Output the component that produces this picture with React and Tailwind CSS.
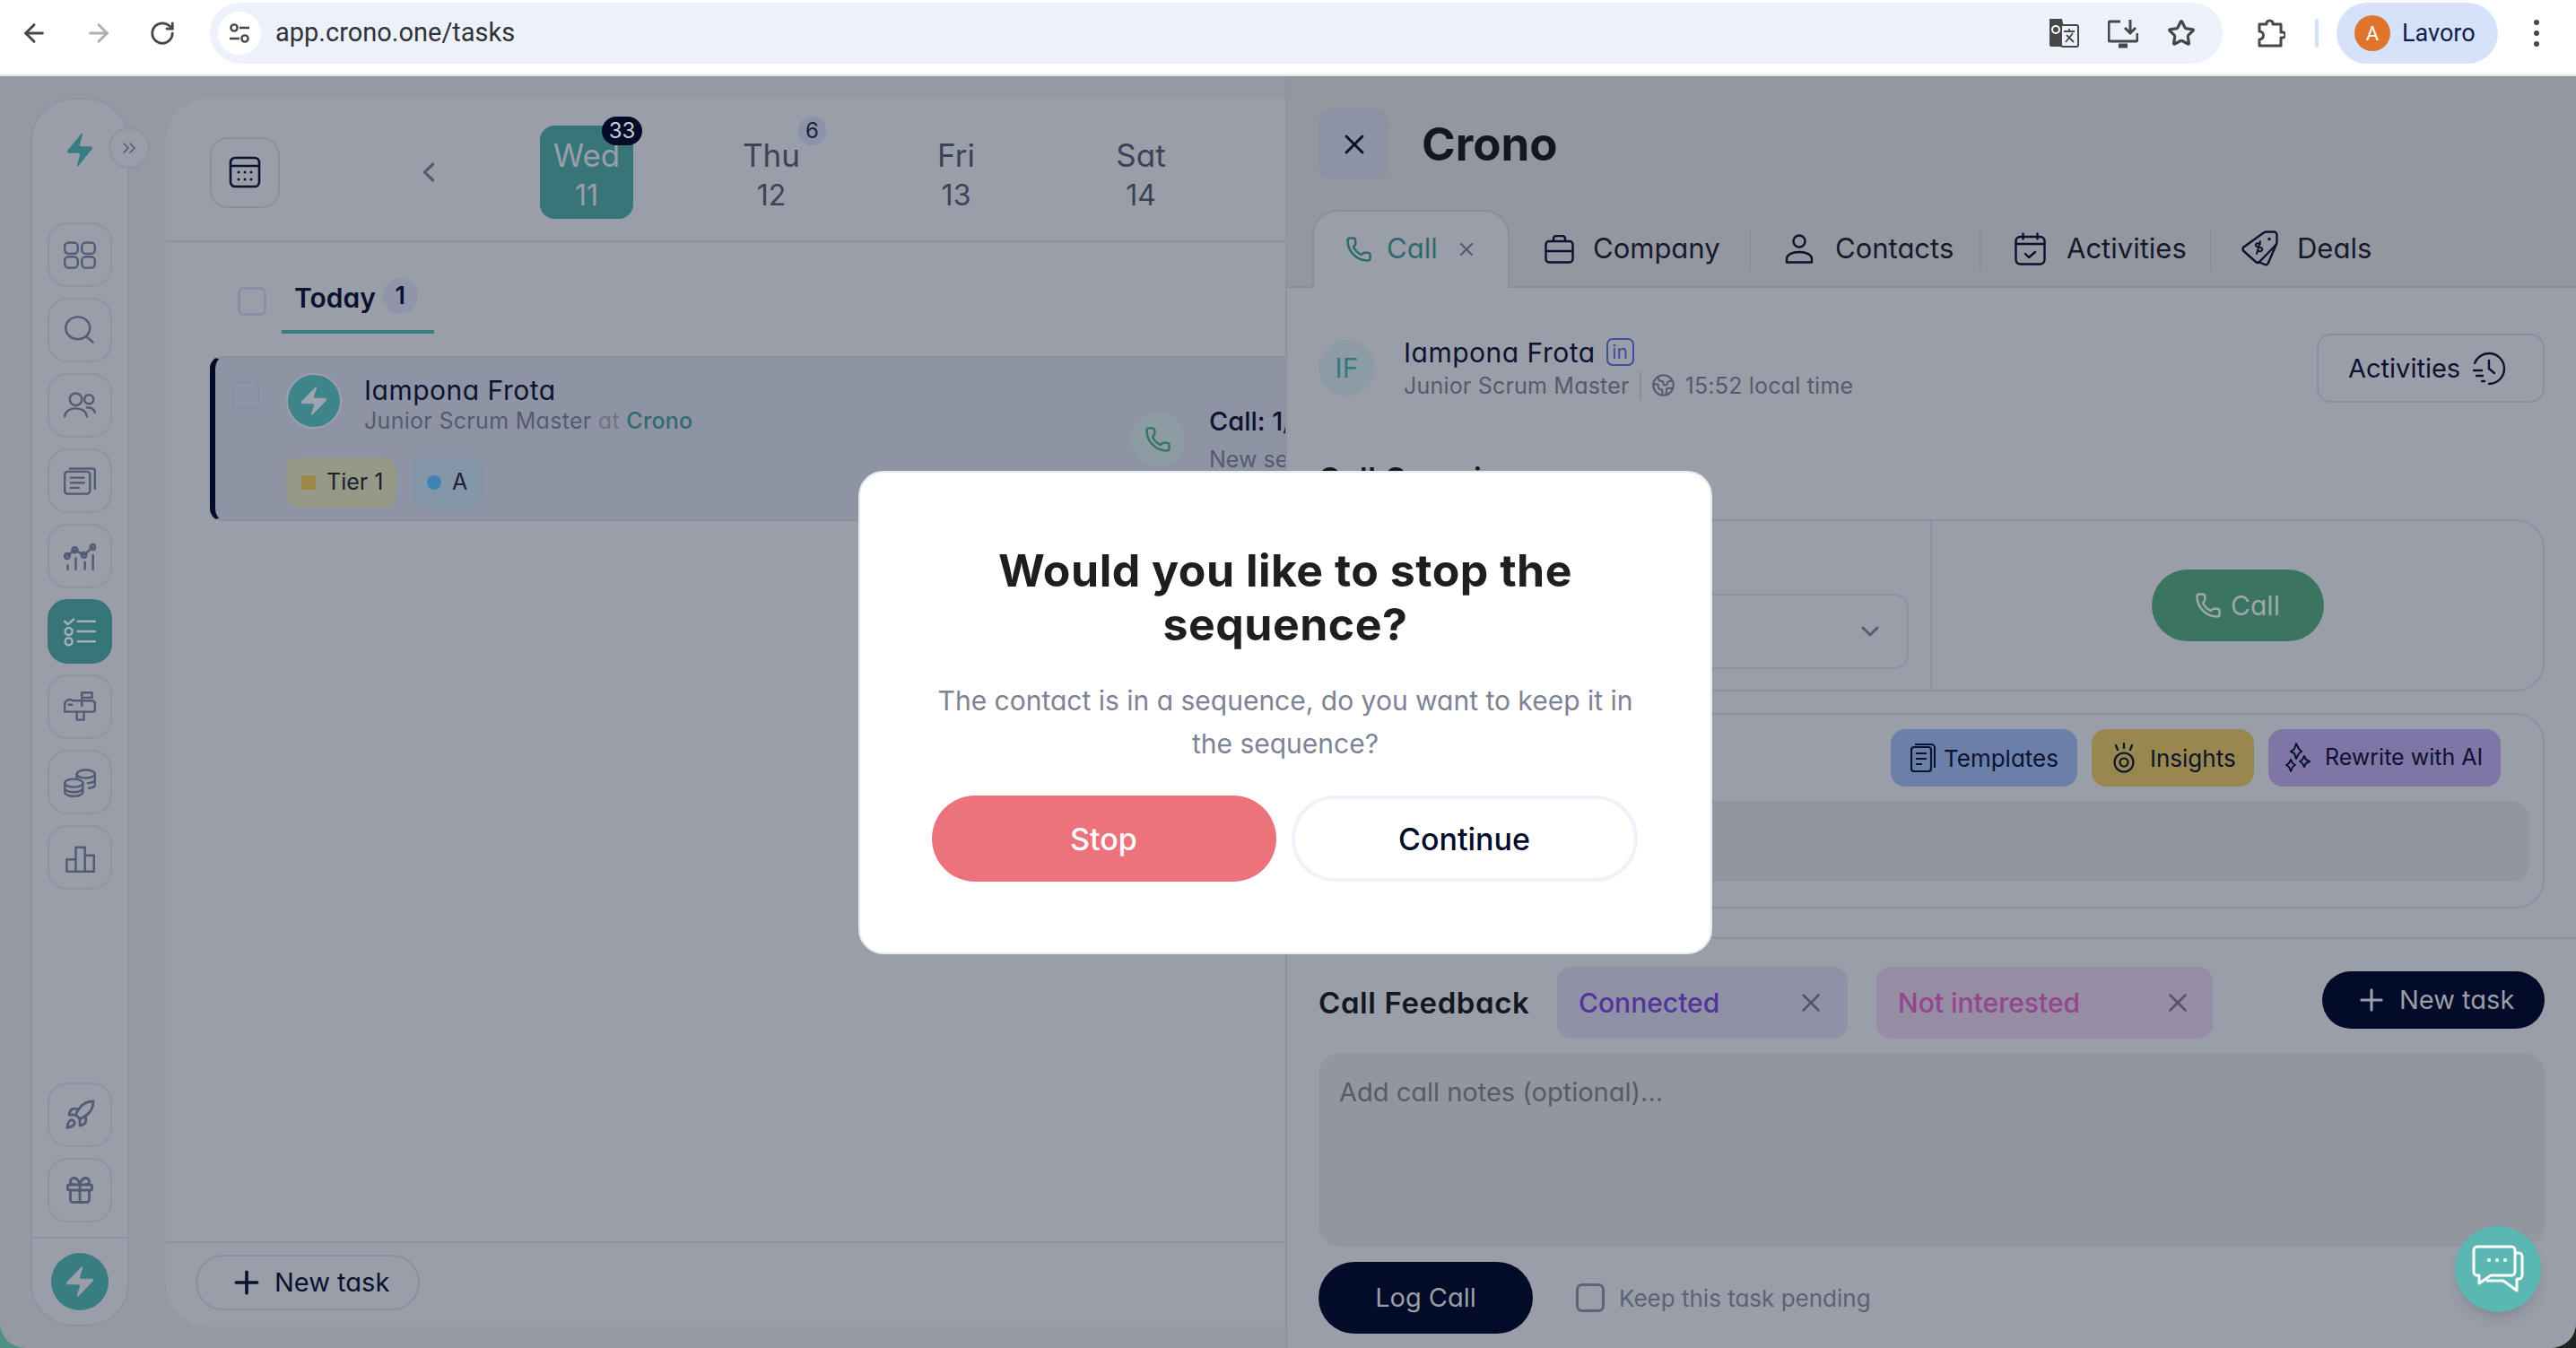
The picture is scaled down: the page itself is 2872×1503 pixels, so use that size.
import {
  ArrowLeft, ArrowRight, RotateCw, Star, Phone, X, Earth, ChevronDown, ChevronLeft, ChevronsRight, Plus, Rocket, Gift,
} from "lucide-react";

const BOLT = "M4 14a1 1 0 0 1-.78-1.63l9.9-10.2a.5.5 0 0 1 .86.46l-1.92 6.02A1 1 0 0 0 13 10h7a1 1 0 0 1 .78 1.63l-9.9 10.2a.5.5 0 0 1-.86-.46l1.92-6.02A1 1 0 0 0 11 14z";

// sidebar glyphs, all on a 32 box
function Glyph({ children, color = "#535b75" }) {
  return (
    <svg width="36" height="36" viewBox="0 0 32 32" fill="none" stroke={color} strokeWidth="2.2" strokeLinecap="round" strokeLinejoin="round">
      {children}
    </svg>
  );
}

const navTop = [
  { id: "grid", icon: <Glyph><rect x="1" y="4" width="13" height="11" rx="4" /><rect x="18" y="4" width="13" height="11" rx="4" /><rect x="1" y="18" width="13" height="11" rx="4" /><rect x="18" y="18" width="13" height="11" rx="4" /></Glyph> },
  { id: "search", icon: <Glyph><ellipse cx="14" cy="14" rx="12" ry="11" /><path d="M23 23l6 5" /></Glyph> },
  { id: "users", icon: <Glyph><circle cx="12" cy="10" r="6" /><path d="M1 27c1-6 5-8 11-8s10 2 11 8" /><circle cx="25" cy="10" r="4.5" /><path d="M23 18c4 0 7 1 8 5" /></Glyph> },
  { id: "docs", icon: <Glyph><rect x="1" y="7" width="25" height="22" rx="3" /><path d="M6 4h23a2 2 0 0 1 2 2v18" /><path d="M7 13h13M7 18h13M7 23h8" /></Glyph> },
  { id: "stats", icon: <Glyph><path d="M3 16l8-6 9 5 9-8" /><circle cx="3.5" cy="16" r="2.6" /><circle cx="11" cy="10" r="2.6" /><circle cx="20" cy="15" r="2.6" /><circle cx="29" cy="7" r="2.6" /><path d="M4 25v4M12 18v11M21 22v7M29 15v14" /></Glyph> },
  { id: "tasks", active: true, icon: <Glyph color="#9fb3b9"><path d="M1 6l3 3 6-5" /><circle cx="5" cy="16" r="3.5" /><circle cx="5" cy="26" r="3.5" /><path d="M14 6h17M14 16h17M14 26h17" /></Glyph> },
  { id: "mail", icon: <Glyph><path d="M9 10h19a3 3 0 0 1 3 3v6a2 2 0 0 1-2 2H1v-7a5 5 0 0 1 8-4z" /><path d="M13 21v8h7v-8" /><path d="M18 15V2h10v5H18" /><path d="M5 14h3" /></Glyph> },
  { id: "coins", icon: <Glyph><ellipse cx="10" cy="17" rx="9" ry="4" /><path d="M1 17v9c0 2 4 4 9 4s9-2 9-4v-9M1 22c0 2 4 4 9 4s9-2 9-4" /><ellipse cx="22" cy="8" rx="9" ry="4" /><path d="M31 8v11c0 1-2 3-6 3M13 9v4M31 14c0 1-3 3-7 3" /></Glyph> },
  { id: "bars", icon: <Glyph><path d="M3 30V18h9v12M12 30V6h9v24M21 30V14h9v16M3 30h27" /></Glyph> },
];

function NavButton({ active, children }) {
  return (
    <div className={`w-[72px] h-[72px] rounded-[22px] flex items-center justify-center border-2 ${active ? "bg-[#387579] border-[#387579]" : "border-[#8f93a2]"}`}>
      {children}
    </div>
  );
}

function Sidebar() {
  return (
    <div className="relative w-[110px] h-[1370px] shrink-0 rounded-[48px] border-2 border-[#8f93a2] bg-[#9a9ea9] flex flex-col items-center">
      <svg className="mt-[34px] shrink-0" width="44" height="44" viewBox="0 0 24 24" fill="#387d82"><path d={BOLT} transform="translate(1.800 0) scale(.85 1)" /></svg>
      <div className="absolute left-[85px] top-[31px] w-[46px] h-[46px] rounded-full border-2 border-[#8f93a2] bg-[#9a9ea9] flex items-center justify-center">
        <ChevronsRight size={24} strokeWidth={1.6} color="#535b75" />
      </div>
      <div className="mt-[59px] flex flex-col gap-[12px]">
        {navTop.map((n) => <NavButton key={n.id} active={n.active}>{n.icon}</NavButton>)}
      </div>
      <div className="mt-auto flex flex-col gap-[12px]">
        <NavButton><Rocket size={36} strokeWidth={1.9} color="#535b75" /></NavButton>
        <NavButton><Gift size={36} strokeWidth={1.9} color="#535b75" /></NavButton>
      </div>
      <div className="mt-[16px] w-full border-t-2 border-[#8f93a2] h-[98px] flex justify-center pt-[16px]">
        <div className="w-[64px] h-[64px] rounded-full bg-[#387d82] flex items-center justify-center">
          <svg width="40" height="42" viewBox="0 0 24 24" fill="#9a9ea9"><path d={BOLT} /></svg>
        </div>
      </div>
    </div>
  );
}

function ChromeBar() {
  return (
    <div className="h-[85px] bg-white border-b-2 border-[#e4e4e4] flex items-center pb-[9px] relative z-10">
      <div className="w-[234px] flex items-center shrink-0 pl-[22px] gap-[40px]">
        <ArrowLeft size={32} strokeWidth={2.2} color="#474747" />
        <ArrowRight size={32} strokeWidth={2.2} color="#b0b0b0" />
        <RotateCw size={30} strokeWidth={2.2} color="#474747" />
      </div>
      <div className="w-[2244px] h-[68px] rounded-full bg-[#edf2fa] flex items-center pl-[9px] pr-[30px]">
        <div className="w-[48px] h-[48px] rounded-full bg-white flex items-center justify-center">
          <svg width="28" height="28" viewBox="0 0 28 28" fill="none" stroke="#474747" strokeWidth="2.4"><circle cx="8" cy="8" r="3.6" /><path d="M14 8h11M3 20h11" /><circle cx="20" cy="20" r="3.6" /></svg>
        </div>
        <span className="ml-[16px] text-[29px] text-[#303238] font-['Roboto',sans-serif]">app.crono.one/tasks</span>
        <div className="ml-auto flex items-center gap-[32px]">
          <svg width="34" height="34" viewBox="0 0 34 34" fill="none">
            <path d="M1 1h14l6 31H3a2 2 0 0 1-2-2z" fill="#474747" />
            <rect x="14" y="8" width="19" height="24" rx="2" stroke="#474747" strokeWidth="2" fill="#edf2fa" />
            <path d="M17 15h12M23 12v3M19 27l8-10M20 19l8 8" stroke="#474747" strokeWidth="1.8" />
            <circle cx="8" cy="13" r="4" stroke="#fff" strokeWidth="2" />
          </svg>
          <svg width="34" height="34" viewBox="0 0 34 34" fill="none" stroke="#474747" strokeWidth="3">
            <path d="M14 4H3a2 2 0 0 0-2 2v18a2 2 0 0 0 2 2h28a2 2 0 0 0 2-2v-7" />
            <path d="M25 2v15M19 11l6 6 6-6" />
            <path d="M12 31h10" strokeWidth="5" />
          </svg>
          <Star size={32} strokeWidth={2.4} color="#474747" />
        </div>
      </div>
      <svg className="ml-[38px] shrink-0" width="32" height="34" viewBox="0 0 32 34" fill="none" stroke="#474747" strokeWidth="3" strokeLinejoin="round">
        <path d="M3 7h8V5a4 4 0 0 1 7 0v2h9v9h2a3 3 0 0 1 0 6h-2v9H3v-7a4.500 4.500 0 0 0 0-9z" />
      </svg>
      <div className="ml-[33px] w-[4px] h-[32px] rounded bg-[#d3e0f8] shrink-0" />
      <div className="ml-[20px] w-[180px] h-[68px] rounded-full bg-[#d6e2f9] flex items-center pl-[20px] shrink-0">
        <div className="w-[40px] h-[40px] rounded-full bg-[#e0742c] text-white text-[22px] flex items-center justify-center font-['Roboto',sans-serif]">A</div>
        <span className="ml-[13px] text-[27px] text-[#0c1f4d] font-['Roboto',sans-serif]">Lavoro</span>
      </div>
      <div className="ml-[40px] flex flex-col gap-[6px]">
        <span className="w-[6px] h-[6px] rounded-full bg-[#474747]" />
        <span className="w-[6px] h-[6px] rounded-full bg-[#474747]" />
        <span className="w-[6px] h-[6px] rounded-full bg-[#474747]" />
      </div>
    </div>
  );
}

const days = [
  { name: "Wed", num: 11, badge: "33", active: true },
  { name: "Thu", num: 12, badge: "6" },
  { name: "Fri", num: 13 },
  { name: "Sat", num: 14 },
];

function Day({ d }) {
  return (
    <div className="w-[206px] shrink-0 flex justify-center">
      <div className={`relative w-[104px] h-[104px] pt-[6px] rounded-[16px] flex flex-col items-center justify-center gap-[9px] ${d.active ? "bg-[#387579] text-[#9a9ea9]" : "text-[#3d4356]"}`}>
        <span className="text-[35px] leading-[36px]">{d.name}</span>
        <span className="text-[32px] leading-[36px]">{d.num}</span>
        {d.badge && (
          <span className={`absolute -top-[10px] rounded-full h-[32px] flex items-center justify-center text-[24px] ${d.active ? "left-[69px] w-[45px] bg-[#020b27] text-[#c8ccd6]" : "left-[82px] w-[31px] bg-[#8a93aa] text-[#1c2238]"}`}>
            {d.badge}
          </span>
        )}
      </div>
    </div>
  );
}

function TaskList() {
  return (
    <div className="flex-1 min-w-0 h-[1370px] rounded-l-[48px] bg-[#9a9ea9] overflow-hidden flex flex-col">
      <div className="h-[161px] shrink-0 border-b-2 border-[#8e929e] pt-[7px] pl-[49px] flex items-center">
        <div className="w-[78px] h-[79px] rounded-[20px] border-2 border-[#8b8fa2] flex items-center justify-center shrink-0">
          <svg width="36" height="36" viewBox="0 0 36 36" fill="none" stroke="#0a1230" strokeWidth="2.6">
            <rect x="2" y="2" width="32" height="32" rx="5" />
            <path d="M2 11h32" />
            <path d="M11 18h.01M18 18h.01M25 18h.01M11 26h.01M18 26h.01M25 26h.01" strokeWidth="3" strokeLinecap="round" />
          </svg>
        </div>
        <ChevronLeft className="ml-[148px] mr-[55px] shrink-0" size={36} strokeWidth={2.2} color="#535b75" />
        <div className="flex">
          {days.map((d) => <Day key={d.name} d={d} />)}
        </div>
      </div>

      <div className="h-[102px] shrink-0 pl-[80px] flex items-end">
        <div className="w-[32px] h-[32px] rounded-[7px] border-[3px] border-[#8590a8] mb-[20px]" />
        <div className="ml-[17px] w-[170px] h-[62px] border-b-4 border-[#387d82] flex items-start pl-[14px]">
          <span className="text-[30px] leading-[44px] font-semibold text-[#0a1230]">Today</span>
          <span className="ml-[8px] w-[39px] h-[40px] rounded-full bg-[#8f96aa] text-[27px] font-semibold text-[#0a1230] flex items-center justify-center">1</span>
        </div>
      </div>

      <div className="ml-[49px] mt-[25px] h-[184px] shrink-0 bg-[#8e94a4] rounded-l-[14px] border-l-[6px] border-y-2 border-l-[#020b27] border-y-[#8a8f9e] flex">
        <div className="ml-[18px] mt-[26px] w-[32px] h-[32px] rounded-[7px] border-[3px] border-[#8590a8] shrink-0" />
        <div className="ml-[29px] pt-[17px]">
          <div className="flex h-[66px]">
            <div className="w-[62px] h-[62px] rounded-full bg-[#3d858b] border-2 border-[#9aa0ae] flex items-center justify-center">
              <svg width="38" height="40" viewBox="0 0 24 24" fill="#9da3b0"><path d={BOLT} /></svg>
            </div>
            <div className="ml-[25px] whitespace-nowrap">
              <div className="text-[30px] tracking-[0.5px] leading-[38px] text-[#0c1230]">Iampona Frota</div>
              <div className="text-[25px] tracking-[0.3px] leading-[30px] text-[#555b6e]">Junior Scrum Master <span className="text-[#6f7484]">at</span> <span className="text-[#2f6a6e] font-medium">Crono</span></div>
            </div>
          </div>
          <div className="mt-[28px] flex gap-[17px]">
            <div className="w-[123px] h-[56px] rounded-[14px] bg-[#969888] flex items-center pl-[17px] text-[25px] text-[#1c2030]">
              <span className="w-[16px] h-[16px] bg-[#9d8a4b] mr-[12px]" />Tier 1
            </div>
            <div className="w-[80px] h-[56px] rounded-[14px] bg-[#8397a8] flex items-center pl-[17px] text-[25px] text-[#1c2030]">
              <span className="w-[16px] h-[16px] rounded-full bg-[#3f85b3] mr-[12px]" />A
            </div>
          </div>
        </div>
        <div className="ml-auto w-[172px] shrink-0 flex pt-[61px] overflow-hidden">
          <div className="w-[60px] h-[60px] rounded-full bg-[#8d9ca4] flex items-center justify-center shrink-0">
            <Phone size={30} strokeWidth={2} color="#3b7561" />
          </div>
          <div className="ml-[27px] -mt-[10px] whitespace-nowrap">
            <div className="text-[29px] leading-[40px] font-medium text-[#0c1230]">Call: 1/2</div>
            <div className="text-[25px] leading-[32px] mt-[6px] text-[#555b6e]">New sequence</div>
          </div>
        </div>
      </div>

      <div className="mt-auto h-[95px] shrink-0 border-t-2 border-[#8e929e] pl-[33px] pt-[13px]">
        <div className="w-[250px] h-[62px] rounded-full border-2 border-[#8b8fa2] flex items-center pl-[35px]">
          <Plus size={40} strokeWidth={2.2} color="#0a1230" />
          <span className="ml-[11px] text-[29px] text-[#0a1230]">New task</span>
        </div>
      </div>
    </div>
  );
}

// tab icons drawn to the picture, lucide has none with these strokes
const tabIcons = {
  company: (
    <svg width="33" height="32" viewBox="0 0 33 32" fill="none" stroke="#0a1230" strokeWidth="2.4" strokeLinejoin="round">
      <rect x="1.500" y="7" width="30" height="23.500" rx="3.500" />
      <path d="M10 7V4a3 3 0 0 1 3-3h7a3 3 0 0 1 3 3v3M1.500 18h30" />
    </svg>
  ),
  contacts: (
    <svg width="32" height="33" viewBox="0 0 32 33" fill="none" stroke="#0a1230" strokeWidth="2.4" strokeLinejoin="round">
      <circle cx="16" cy="8" r="6.500" />
      <path d="M2 31.500V28c0-5 6-8 14-8s14 3 14 8v3.500z" />
    </svg>
  ),
  activities: (
    <svg width="35" height="37" viewBox="0 0 35 37" fill="none" stroke="#0a1230" strokeWidth="2.4" strokeLinecap="round" strokeLinejoin="round">
      <rect x="1.500" y="5" width="32" height="30.500" rx="5" />
      <path d="M9.500 1.500v6M25.500 1.500v6M1.500 13h32M12 24l4 4 7-6" />
    </svg>
  ),
  deals: (
    <svg width="41" height="42" viewBox="0 0 41 42" fill="none" stroke="#0a1230" strokeWidth="2.4" strokeLinecap="round" strokeLinejoin="round">
      <path d="M28 1.500h8a3.500 3.500 0 0 1 3.500 3.500v8a5 5 0 0 1-1.500 3.500L20 35a3 3 0 0 1-4 0L2.500 23a3 3 0 0 1 0-4.500L24 3a6 6 0 0 1 4-1.500z" />
      <path d="M39 15l-9 21a3 3 0 0 1-4 2l-7-3" />
      <path d="M31 9.500h.01" strokeWidth="3.500" />
      <path d="M21 15c-3-2-6 0-5 2s6 1 7 3-2 5-5 2M21 12l-4 14" strokeWidth="2" />
    </svg>
  ),
};

function Tab({ icon, label, boxClass, gapClass }) {
  return (
    <div className={`h-[48px] flex items-center shrink-0 ${boxClass}`}>
      {icon}
      <span className={`text-[31px] text-[#151a2d] ${gapClass}`}>{label}</span>
    </div>
  );
}

function Details() {
  return (
    <div className="w-[1439px] shrink-0 h-[1418px] -mt-[24px] bg-[#9a9ea9] border-l-2 border-[#8f939e] flex flex-col">
      <div className="h-[236px] shrink-0 bg-[#94979f] border-b-2 border-[#8a8d9c] flex flex-col">
        <div className="mt-[36px] ml-[35px] flex items-center">
          <div className="w-[79px] h-[80px] rounded-[16px] bg-[#8d93a4] flex items-center justify-center">
            <X size={36} strokeWidth={2} color="#0a1230" />
          </div>
          <span className="ml-[36px] text-[51px] font-bold text-[#14171f]">Crono</span>
        </div>
        <div className="mt-auto ml-[28px] flex items-end -mb-[2px]">
          <div className="w-[220px] h-[87px] rounded-t-[28px] border-2 border-b-0 border-[#8a8d9c] bg-[#9a9ea9] flex items-center pl-[35px] pb-[2px] shrink-0">
            <Phone size={30} strokeWidth={2} color="#2f6a6e" />
            <span className="ml-[16px] text-[31px] text-[#2f6a6e]">Call</span>
            <X className="ml-[20px]" size={24} strokeWidth={2.2} color="#535b75" />
          </div>
          <div className="flex items-center h-[85px] pb-[2px]">
            <Tab boxClass="w-[269px] pl-[39px] border-r-2 border-[#8b8f9a]" gapClass="ml-[21px]" label="Company" icon={tabIcons.company} />
            <Tab boxClass="w-[257px] pl-[38px] border-r-2 border-[#8b8f9a]" gapClass="ml-[24px]" label="Contacts" icon={tabIcons.contacts} />
            <Tab boxClass="w-[257px] pl-[37px] border-r-2 border-[#8b8f9a]" gapClass="ml-[23px]" label="Activities" icon={tabIcons.activities} />
            <Tab boxClass="w-[240px] pl-[33px]" gapClass="ml-[21px]" label="Deals" icon={tabIcons.deals} />
          </div>
        </div>
      </div>

      <div className="mx-[35px] mt-[51px] h-[77px] shrink-0 flex items-center">
        <div className="w-[63px] h-[63px] rounded-full bg-[#8d9ca4] text-[#2f7a7e] text-[30px] flex items-center justify-center">IF</div>
        <div className="ml-[32px]">
          <div className="flex items-center">
            <span className="text-[30px] tracking-[0.5px] leading-[36px] text-[#0c1230]">Iampona Frota</span>
            <span className="ml-[12px] w-[31px] h-[31px] rounded-[7px] border-2 border-[#3b4ea0] text-[#3b4ea0] text-[21px] leading-none flex items-center justify-center">in</span>
          </div>
          <div className="flex items-center mt-[2px] text-[25px] tracking-[0.2px] leading-[34px] text-[#555b6e]">
            <span>Junior Scrum Master</span>
            <span className="mx-[11px] w-[2px] h-[32px] bg-[#8b8f9a]" />
            <Earth size={27} strokeWidth={1.8} color="#555b6e" />
            <span className="ml-[11px]">15:52 local time</span>
          </div>
        </div>
        <div className="ml-auto w-[254px] h-[77px] rounded-[16px] border-2 border-[#8b8fa2] flex items-center pl-[33px]">
          <span className="text-[29px] text-[#0c1230]">Activities</span>
          <svg className="ml-[12px]" width="40" height="40" viewBox="0 0 40 40" fill="none" stroke="#0a1230" strokeWidth="2.400" strokeLinecap="round" strokeLinejoin="round">
            <path d="M4 14a17 17 0 0 1 16-11 17 17 0 0 1 0 34" />
            <path d="M20 11v9l6 5M3 22h9M6 28h7M12 34h3" />
          </svg>
        </div>
      </div>

      <div className="mx-[35px] mt-[62px] h-[44px] shrink-0 text-[33px] tracking-[0.6px] leading-[44px] font-semibold text-[#14171f]">Call Overview</div>

      <div className="mx-[35px] mt-[24px] h-[192px] shrink-0 rounded-[32px] border-2 border-[#8d91a0] flex">
        <div className="w-[682px] border-r-2 border-[#8d91a0] pt-[81px] pl-[24px] pr-[24px] shrink-0">
          <div className="h-[84px] rounded-[16px] border-2 border-[#8d91a0] flex items-center justify-end pr-[25px]">
            <ChevronDown size={32} strokeWidth={2.2} color="#535b75" />
          </div>
        </div>
        <div className="flex-1 flex items-center justify-center">
          <div className="w-[192px] h-[80px] rounded-full bg-[#3b7561] flex items-center justify-center text-[30px] text-[#9fa6ac]">
            <Phone size={30} strokeWidth={2} color="#9fa6ac" />
            <span className="ml-[10px]">Call</span>
          </div>
        </div>
      </div>

      <div className="mx-[35px] mt-[24px] h-[218px] shrink-0 rounded-[32px] border-2 border-[#8d91a0] pt-[16px]">
        <div className="flex justify-end gap-[16px] pr-[47px]">
          <div className="w-[208px] h-[64px] rounded-[16px] bg-[#6b80a8] flex items-center pl-[22px] text-[26px] text-[#0c1230]">
            <svg width="28" height="32" viewBox="0 0 28 32" fill="none" stroke="#0a1230" strokeWidth="2.2"><rect x="1" y="4" width="22" height="27" rx="3" /><path d="M5 1h18a4 4 0 0 1 4 4v22" /><path d="M6 11h12M6 17h12M6 23h7" /></svg>
            <span className="ml-[9px]">Templates</span>
          </div>
          <div className="w-[181px] h-[64px] rounded-[16px] bg-[#98884d] flex items-center pl-[23px] text-[26px] text-[#0c1230]">
            <svg width="26" height="34" viewBox="0 0 26 34" fill="none" stroke="#0a1230" strokeWidth="2.2"><circle cx="13" cy="22" r="10.500" /><circle cx="13" cy="22" r="4.500" /><path d="M13 1v5M4 3l2 5M22 3l-2 5" strokeLinecap="round" /></svg>
            <span className="ml-[16px]">Insights</span>
          </div>
          <div className="w-[259px] h-[64px] rounded-[16px] bg-[#8076a6] flex items-center pl-[19px] text-[25px] text-[#0c1230]">
            <svg width="28" height="34" viewBox="0 0 28 34" fill="none" stroke="#0a1230" strokeWidth="2" strokeLinejoin="round"><path d="M12 1l3 6 3 3-3 2-3 6-2-6-4-2 4-3zM6 19l2 4 3 2-3 2-2 5-2-5-3-2 3-2zM21 15l2 4 4 2-4 2-2 4-2-4-3-2 3-2z" /></svg>
            <span className="ml-[16px]">Rewrite with AI</span>
          </div>
        </div>
        <div className="mt-[16px] ml-[16px] mr-[15px] h-[90px] rounded-[20px] bg-[#92969f]" />
      </div>

      <div className="mt-[32px] h-[2px] shrink-0 bg-[#8d91a0]" />

      <div className="mx-[35px] mt-[31px] h-[80px] shrink-0 flex items-start">
        <span className="text-[33px] tracking-[0.6px] leading-[80px] font-semibold text-[#14171f] w-[266px] shrink-0 whitespace-nowrap">Call Feedback</span>
        <div className="w-[324px] h-[80px] rounded-[16px] bg-[#8f91a6] flex items-center justify-between pl-[24px] pr-[24px] shrink-0">
          <span className="text-[30px] font-medium text-[#51359b]">Connected</span>
          <X size={34} strokeWidth={1.8} color="#505568" />
        </div>
        <div className="ml-[32px] w-[375px] h-[80px] rounded-[16px] bg-[#968ca3] flex items-center justify-between pl-[24px] pr-[22px] shrink-0">
          <span className="text-[30px] font-medium text-[#93468f]">Not interested</span>
          <X size={34} strokeWidth={1.8} color="#505568" />
        </div>
        <div className="ml-auto mt-[5px] w-[248px] h-[64px] rounded-full bg-[#020b27] flex items-center pl-[36px]">
          <Plus size={38} strokeWidth={2} color="#9a9ea9" />
          <span className="ml-[12px] text-[29px] text-[#9a9ea9]">New task</span>
        </div>
      </div>

      <div className="mx-[35px] mt-[16px] h-[216px] shrink-0 rounded-[24px] bg-[#92969f] px-[23px] py-[24px] text-[29px] leading-[40px] text-[#565b68]">
        Add call notes (optional)...
      </div>

      <div className="mx-[35px] mt-[17px] h-[80px] shrink-0 flex items-center">
        <div className="w-[239px] h-[80px] rounded-full bg-[#020b27] flex items-center justify-center text-[29px] text-[#9a9ea9]">Log Call</div>
        <div className="ml-[48px] w-[32px] h-[32px] rounded-[7px] border-[3px] border-[#5d6479]" />
        <span className="ml-[16px] text-[26px] text-[#5d6272]">Keep this task pending</span>
      </div>
    </div>
  );
}

function StopSequenceModal() {
  return (
    <div className="absolute left-[957px] top-[525px] z-20 w-[952px] h-[539px] rounded-[28px] bg-white border-2 border-[#e6e9f0] flex flex-col items-center">
      <h2 className="mt-[79px] w-[720px] text-center text-[50px] leading-[60px] font-bold tracking-[0.5px] text-[#1e1e1e]">
        Would you like to stop the sequence?
      </h2>
      <p className="mt-[31px] w-[800px] text-center text-[30px] leading-[48px] text-[#7d8394]">
        The contact is in a sequence, do you want to keep it in the sequence?
      </p>
      <div className="mt-[34px] flex gap-[17px] -translate-x-[1px]">
        <div className="w-[384px] h-[96px] rounded-full bg-[#ec727b] flex items-center justify-center text-[34px] font-medium text-white">Stop</div>
        <div className="w-[386px] h-[96px] rounded-full bg-white border-4 border-[#edf2fb] flex items-center justify-center text-[34px] font-medium text-[#020b27]">Continue</div>
      </div>
    </div>
  );
}

function ChatBubble() {
  return (
    <div className="absolute right-[39px] top-[1367px] z-20 w-[96px] h-[96px] rounded-full bg-[#5bb7b2] shadow-lg flex items-center justify-center">
      <svg width="58" height="54" viewBox="0 0 58 54" fill="none" stroke="#fff" strokeWidth="3" strokeLinejoin="round">
        <path d="M6 2h38a4 4 0 0 1 4 4v24a4 4 0 0 1-4 4H21L8 43V34H6a4 4 0 0 1-4-4V6a4 4 0 0 1 4-4z" />
        <path d="M49 9h3a4 4 0 0 1 4 4v21a4 4 0 0 1-4 4h-2v13L35 40H16" />
        <path d="M19 17h.01M28 17h.01M37 17h.01" strokeLinecap="square" strokeWidth="3.500" />
      </svg>
    </div>
  );
}

export default function App() {
  return (
    <div className="relative w-[2872px] h-[1503px] overflow-hidden bg-[linear-gradient(90deg,#4f8f86_50%,#1c2320_50%)] font-['Inter','Liberation_Sans',sans-serif] [font-feature-settings:'cv11']">
      <ChromeBar />
      <div className="h-[1418px] bg-[#9599a3] rounded-b-[28px] overflow-hidden flex pt-[24px] pl-[34px]">
        <Sidebar />
        <div className="ml-[41px] flex-1 min-w-0">
          <TaskList />
        </div>
        <Details />
      </div>
      <StopSequenceModal />
      <ChatBubble />
    </div>
  );
}
